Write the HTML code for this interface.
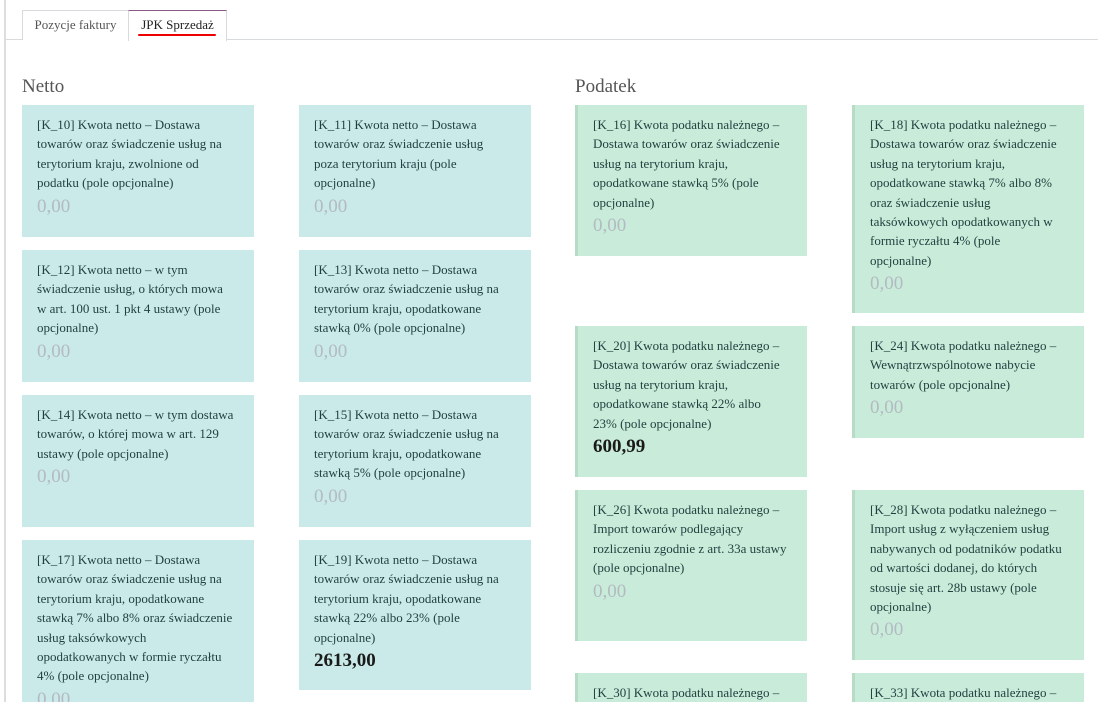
<!DOCTYPE html>
<html style="width:1098px;height:702px;overflow:hidden"><head><meta charset="utf-8"><style>
html,body{overflow:hidden}
body{margin:0;width:1098px;height:702px;overflow:hidden;background:#fff;font-family:"Liberation Serif",serif;position:relative}
.lb{position:absolute;left:4px;top:0;width:2px;height:702px;background:#ddd}
.tabline{position:absolute;left:6px;right:0;top:39px;height:1px;background:#d8dbdd}
.tab{position:absolute;top:10px;height:29px;border:1px solid #d8dbdd;border-bottom:none;font-size:13px;color:#555;line-height:28px;text-align:center;background:#fff}
.t1{left:22px;width:105px}
.t2{left:128px;width:97px;height:30px;border-top-color:#8a5a84;color:#222;z-index:2}
.red{position:absolute;left:138px;top:34px;width:78px;height:2px;background:#e00;border-radius:1px;z-index:3}
h2{position:absolute;margin:0;font-weight:normal;font-size:19px;color:#555;top:76px}
.c{position:absolute;width:202px;padding:10px 15px 0 15px;font-size:13px;line-height:19.4px;color:#1f3f3f;box-sizing:content-box}
.b{background:#caeaea}
.g{background:#c9ebd9;border-left:3px solid #b6dcc6;width:199px}
.v{font-size:19px;line-height:26px;color:#b3bac2;margin-top:1px}
.v.k{color:#1a1a1a;font-weight:bold}
</style></head><body>
<div class="lb"></div>
<div class="tabline"></div>
<div class="tab t1">Pozycje faktury</div>
<div class="tab t2">JPK Sprzedaż</div>
<div class="red"></div>
<h2 style="left:22px">Netto</h2>
<h2 style="left:575px">Podatek</h2>

<div class="c b" style="left:22px;top:105px;height:122px">[K_10] Kwota netto – Dostawa<br>towarów oraz świadczenie usług na<br>terytorium kraju, zwolnione od<br>podatku (pole opcjonalne)<div class="v">0,00</div></div>
<div class="c b" style="left:299px;top:105px;height:122px">[K_11] Kwota netto – Dostawa<br>towarów oraz świadczenie usług<br>poza terytorium kraju (pole<br>opcjonalne)<div class="v">0,00</div></div>
<div class="c b" style="left:22px;top:250px;height:122px">[K_12] Kwota netto – w tym<br>świadczenie usług, o których mowa<br>w art. 100 ust. 1 pkt 4 ustawy (pole<br>opcjonalne)<div class="v">0,00</div></div>
<div class="c b" style="left:299px;top:250px;height:122px">[K_13] Kwota netto – Dostawa<br>towarów oraz świadczenie usług na<br>terytorium kraju, opodatkowane<br>stawką 0% (pole opcjonalne)<div class="v">0,00</div></div>
<div class="c b" style="left:22px;top:395px;height:122px">[K_14] Kwota netto – w tym dostawa<br>towarów, o której mowa w art. 129<br>ustawy (pole opcjonalne)<div class="v">0,00</div></div>
<div class="c b" style="left:299px;top:395px;height:122px">[K_15] Kwota netto – Dostawa<br>towarów oraz świadczenie usług na<br>terytorium kraju, opodatkowane<br>stawką 5% (pole opcjonalne)<div class="v">0,00</div></div>
<div class="c b" style="left:22px;top:540px;height:181px">[K_17] Kwota netto – Dostawa<br>towarów oraz świadczenie usług na<br>terytorium kraju, opodatkowane<br>stawką 7% albo 8% oraz świadczenie<br>usług taksówkowych<br>opodatkowanych w formie ryczałtu<br>4% (pole opcjonalne)<div class="v">0,00</div></div>
<div class="c b" style="left:299px;top:540px;height:140px">[K_19] Kwota netto – Dostawa<br>towarów oraz świadczenie usług na<br>terytorium kraju, opodatkowane<br>stawką 22% albo 23% (pole<br>opcjonalne)<div class="v k">2613,00</div></div>

<div class="c g" style="left:575px;top:105px;height:141px">[K_16] Kwota podatku należnego –<br>Dostawa towarów oraz świadczenie<br>usług na terytorium kraju,<br>opodatkowane stawką 5% (pole<br>opcjonalne)<div class="v">0,00</div></div>
<div class="c g" style="left:852px;top:105px;height:198px">[K_18] Kwota podatku należnego –<br>Dostawa towarów oraz świadczenie<br>usług na terytorium kraju,<br>opodatkowane stawką 7% albo 8%<br>oraz świadczenie usług<br>taksówkowych opodatkowanych w<br>formie ryczałtu 4% (pole<br>opcjonalne)<div class="v">0,00</div></div>
<div class="c g" style="left:575px;top:326px;height:141px">[K_20] Kwota podatku należnego –<br>Dostawa towarów oraz świadczenie<br>usług na terytorium kraju,<br>opodatkowane stawką 22% albo<br>23% (pole opcjonalne)<div class="v k">600,99</div></div>
<div class="c g" style="left:852px;top:326px;height:102px">[K_24] Kwota podatku należnego –<br>Wewnątrzwspólnotowe nabycie<br>towarów (pole opcjonalne)<div class="v">0,00</div></div>
<div class="c g" style="left:575px;top:490px;height:141px">[K_26] Kwota podatku należnego –<br>Import towarów podlegający<br>rozliczeniu zgodnie z art. 33a ustawy<br>(pole opcjonalne)<div class="v">0,00</div></div>
<div class="c g" style="left:852px;top:490px;height:160px">[K_28] Kwota podatku należnego –<br>Import usług z wyłączeniem usług<br>nabywanych od podatników podatku<br>od wartości dodanej, do których<br>stosuje się art. 28b ustawy (pole<br>opcjonalne)<div class="v">0,00</div></div>
<div class="c g" style="left:575px;top:673px;height:60px">[K_30] Kwota podatku należnego –</div>
<div class="c g" style="left:852px;top:673px;height:60px">[K_33] Kwota podatku należnego –</div>
</body></html>
